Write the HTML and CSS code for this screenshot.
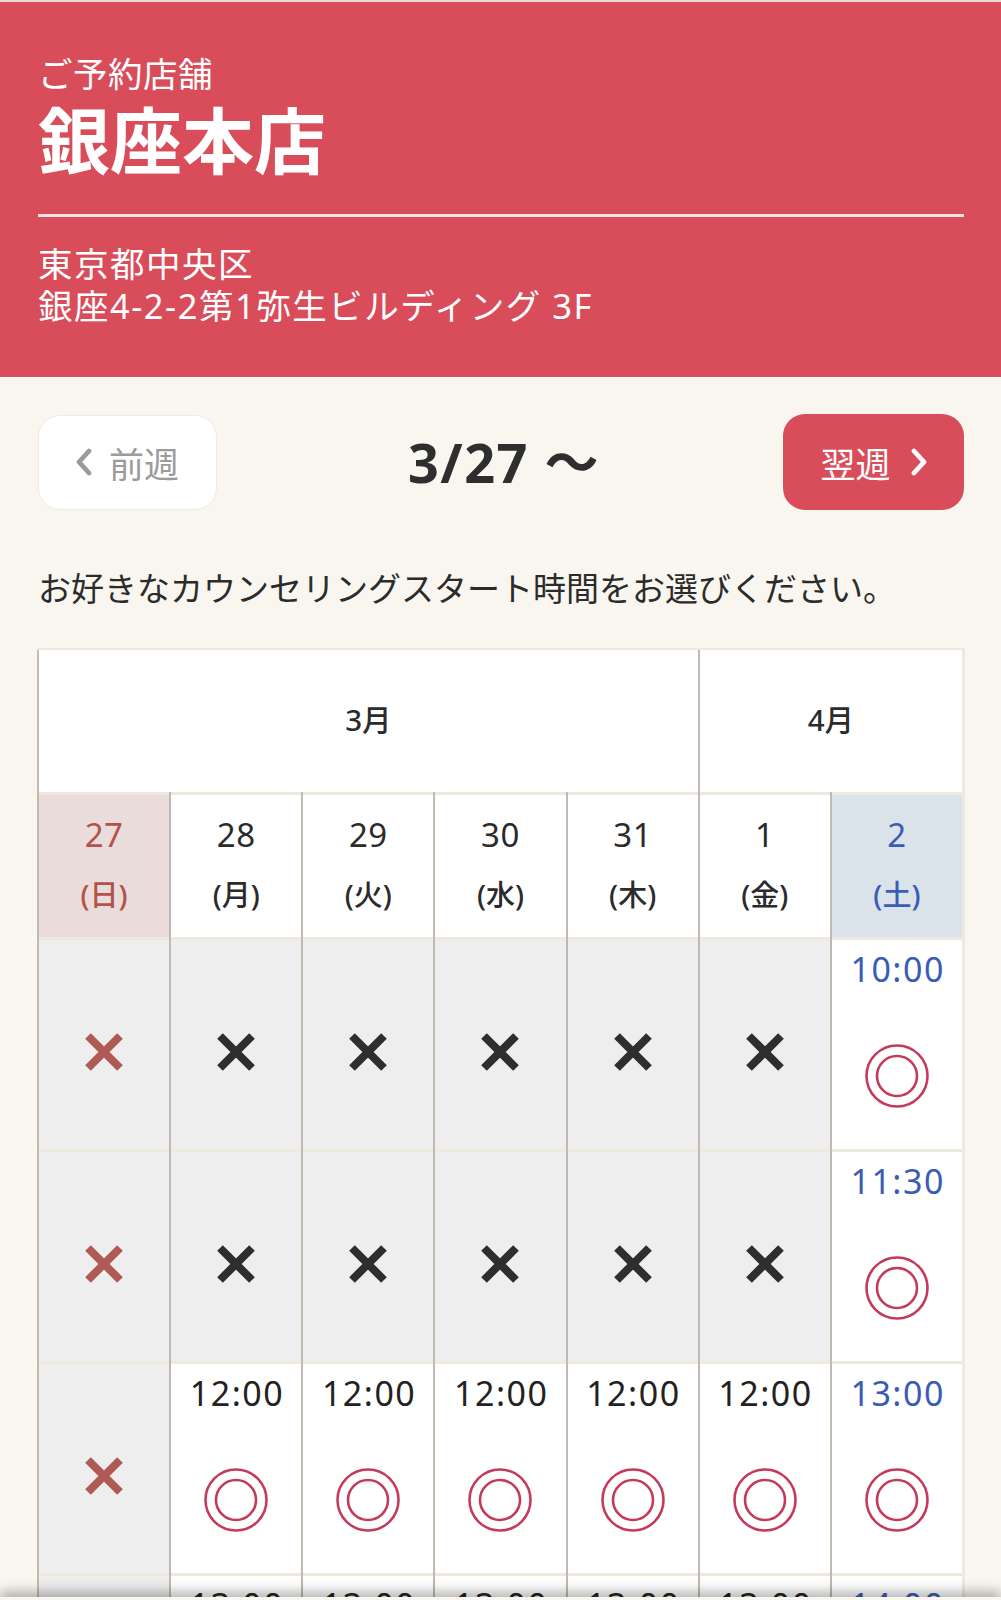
FILE: index.html
```html
<!DOCTYPE html>
<html lang="ja">
<head>
<meta charset="utf-8">
<title>ご予約店舗 銀座本店</title>
<link rel="stylesheet" href="styles.css">
</head>
<body>
<header class="shop">
  <p class="shop-label">ご予約店舗</p>
  <h1 class="shop-name">銀座本店</h1>
  <hr class="shop-rule">
  <p class="shop-addr">東京都中央区<br>銀座4-2-2第1弥生ビルディング 3F</p>
</header>
<main class="content">
  <nav class="week-nav">
    <button class="btn btn-prev" type="button">
      <svg class="chev" width="16" height="28" viewBox="0 0 16 28"><polyline points="13,3 3,14 13,25" fill="none" stroke="currentColor" stroke-width="4.8" stroke-linecap="round" stroke-linejoin="round"/></svg>
      <span>前週</span>
    </button>
    <div class="week-date">3/27 ～</div>
    <button class="btn btn-next" type="button">
      <span>翌週</span>
      <svg class="chev" width="16" height="28" viewBox="0 0 16 28"><polyline points="3,3 13,14 3,25" fill="none" stroke="currentColor" stroke-width="4.8" stroke-linecap="round" stroke-linejoin="round"/></svg>
    </button>
  </nav>
  <p class="lead">お好きなカウンセリングスタート時間をお選びください。</p>

  <div class="cal">
    <div class="cell month span5">3月</div>
    <div class="cell month span2">4月</div>

    <div class="cell day sun"><span class="d-num">27</span><span class="d-wk">(日)</span></div>
    <div class="cell day"><span class="d-num">28</span><span class="d-wk">(月)</span></div>
    <div class="cell day"><span class="d-num">29</span><span class="d-wk">(火)</span></div>
    <div class="cell day"><span class="d-num">30</span><span class="d-wk">(水)</span></div>
    <div class="cell day"><span class="d-num">31</span><span class="d-wk">(木)</span></div>
    <div class="cell day"><span class="d-num">1</span><span class="d-wk">(金)</span></div>
    <div class="cell day sat"><span class="d-num">2</span><span class="d-wk">(土)</span></div>

    <!-- row 1 -->
    <div class="cell slot off sun"><svg class="xmark" width="38" height="38" viewBox="0 0 38 38"><path d="M3 3L35 35M35 3L3 35" stroke="currentColor" stroke-width="8"/></svg></div>
    <div class="cell slot off"><svg class="xmark" width="38" height="38" viewBox="0 0 38 38"><path d="M3 3L35 35M35 3L3 35" stroke="currentColor" stroke-width="8"/></svg></div>
    <div class="cell slot off"><svg class="xmark" width="38" height="38" viewBox="0 0 38 38"><path d="M3 3L35 35M35 3L3 35" stroke="currentColor" stroke-width="8"/></svg></div>
    <div class="cell slot off"><svg class="xmark" width="38" height="38" viewBox="0 0 38 38"><path d="M3 3L35 35M35 3L3 35" stroke="currentColor" stroke-width="8"/></svg></div>
    <div class="cell slot off"><svg class="xmark" width="38" height="38" viewBox="0 0 38 38"><path d="M3 3L35 35M35 3L3 35" stroke="currentColor" stroke-width="8"/></svg></div>
    <div class="cell slot off"><svg class="xmark" width="38" height="38" viewBox="0 0 38 38"><path d="M3 3L35 35M35 3L3 35" stroke="currentColor" stroke-width="8"/></svg></div>
    <div class="cell slot open sat"><span class="time">10:00</span><svg class="omark" width="66" height="66" viewBox="0 0 66 66"><circle cx="33" cy="33" r="30.5" fill="none" stroke="currentColor" stroke-width="2.6"/><circle cx="33" cy="33" r="20" fill="none" stroke="currentColor" stroke-width="2.6"/></svg></div>

    <!-- row 2 -->
    <div class="cell slot off sun"><svg class="xmark" width="38" height="38" viewBox="0 0 38 38"><path d="M3 3L35 35M35 3L3 35" stroke="currentColor" stroke-width="8"/></svg></div>
    <div class="cell slot off"><svg class="xmark" width="38" height="38" viewBox="0 0 38 38"><path d="M3 3L35 35M35 3L3 35" stroke="currentColor" stroke-width="8"/></svg></div>
    <div class="cell slot off"><svg class="xmark" width="38" height="38" viewBox="0 0 38 38"><path d="M3 3L35 35M35 3L3 35" stroke="currentColor" stroke-width="8"/></svg></div>
    <div class="cell slot off"><svg class="xmark" width="38" height="38" viewBox="0 0 38 38"><path d="M3 3L35 35M35 3L3 35" stroke="currentColor" stroke-width="8"/></svg></div>
    <div class="cell slot off"><svg class="xmark" width="38" height="38" viewBox="0 0 38 38"><path d="M3 3L35 35M35 3L3 35" stroke="currentColor" stroke-width="8"/></svg></div>
    <div class="cell slot off"><svg class="xmark" width="38" height="38" viewBox="0 0 38 38"><path d="M3 3L35 35M35 3L3 35" stroke="currentColor" stroke-width="8"/></svg></div>
    <div class="cell slot open sat"><span class="time">11:30</span><svg class="omark" width="66" height="66" viewBox="0 0 66 66"><circle cx="33" cy="33" r="30.5" fill="none" stroke="currentColor" stroke-width="2.6"/><circle cx="33" cy="33" r="20" fill="none" stroke="currentColor" stroke-width="2.6"/></svg></div>

    <!-- row 3 -->
    <div class="cell slot off sun"><svg class="xmark" width="38" height="38" viewBox="0 0 38 38"><path d="M3 3L35 35M35 3L3 35" stroke="currentColor" stroke-width="8"/></svg></div>
    <div class="cell slot open"><span class="time">12:00</span><svg class="omark" width="66" height="66" viewBox="0 0 66 66"><circle cx="33" cy="33" r="30.5" fill="none" stroke="currentColor" stroke-width="2.6"/><circle cx="33" cy="33" r="20" fill="none" stroke="currentColor" stroke-width="2.6"/></svg></div>
    <div class="cell slot open"><span class="time">12:00</span><svg class="omark" width="66" height="66" viewBox="0 0 66 66"><circle cx="33" cy="33" r="30.5" fill="none" stroke="currentColor" stroke-width="2.6"/><circle cx="33" cy="33" r="20" fill="none" stroke="currentColor" stroke-width="2.6"/></svg></div>
    <div class="cell slot open"><span class="time">12:00</span><svg class="omark" width="66" height="66" viewBox="0 0 66 66"><circle cx="33" cy="33" r="30.5" fill="none" stroke="currentColor" stroke-width="2.6"/><circle cx="33" cy="33" r="20" fill="none" stroke="currentColor" stroke-width="2.6"/></svg></div>
    <div class="cell slot open"><span class="time">12:00</span><svg class="omark" width="66" height="66" viewBox="0 0 66 66"><circle cx="33" cy="33" r="30.5" fill="none" stroke="currentColor" stroke-width="2.6"/><circle cx="33" cy="33" r="20" fill="none" stroke="currentColor" stroke-width="2.6"/></svg></div>
    <div class="cell slot open"><span class="time">12:00</span><svg class="omark" width="66" height="66" viewBox="0 0 66 66"><circle cx="33" cy="33" r="30.5" fill="none" stroke="currentColor" stroke-width="2.6"/><circle cx="33" cy="33" r="20" fill="none" stroke="currentColor" stroke-width="2.6"/></svg></div>
    <div class="cell slot open sat"><span class="time">13:00</span><svg class="omark" width="66" height="66" viewBox="0 0 66 66"><circle cx="33" cy="33" r="30.5" fill="none" stroke="currentColor" stroke-width="2.6"/><circle cx="33" cy="33" r="20" fill="none" stroke="currentColor" stroke-width="2.6"/></svg></div>

    <!-- row 4 -->
    <div class="cell slot off sun"><svg class="xmark" width="38" height="38" viewBox="0 0 38 38"><path d="M3 3L35 35M35 3L3 35" stroke="currentColor" stroke-width="8"/></svg></div>
    <div class="cell slot open"><span class="time">13:00</span></div>
    <div class="cell slot open"><span class="time">13:00</span></div>
    <div class="cell slot open"><span class="time">13:00</span></div>
    <div class="cell slot open"><span class="time">13:00</span></div>
    <div class="cell slot open"><span class="time">13:00</span></div>
    <div class="cell slot open sat"><span class="time">14:00</span></div>
  </div>
</main>
<div class="footer-shade"></div>
</body>
</html>
```

FILE: styles.css
```css
* { box-sizing: border-box; }

html, body {
  margin: 0;
  padding: 0;
}

body {
  background: #f8f6ef;
  font-family: "Noto Sans", "Noto Sans CJK JP", sans-serif;
  color: #2b2b2b;
  width: 1001px;
}

/* ---------- shop header ---------- */
.shop {
  background: #d94c5a;
  color: #ffffff;
  border-top: 2px solid #eadada;
  padding: 52px 37px 50px 38px;
}

.shop-label {
  margin: 0;
  font-size: 34.5px;
  line-height: 40px;
  font-weight: 400;
  letter-spacing: 0.5px;
}

.shop-name {
  margin: 6px 0 0;
  font-size: 72px;
  line-height: 80px;
  font-weight: 700;
}

.shop-rule {
  margin: 34px 0 0;
  border: 0;
  height: 3px;
  background: #f6e3e4;
}

.shop-addr {
  margin: 26px 0 0;
  font-size: 34.5px;
  line-height: 42px;
  letter-spacing: 1.5px;
}

/* ---------- week navigation ---------- */
.content {
  padding: 37px 0 40px;
}

.week-nav {
  display: flex;
  align-items: center;
  justify-content: space-between;
  padding: 0 37px 0 38px;
}

.btn {
  display: flex;
  align-items: center;
  justify-content: center;
  gap: 17px;
  height: 95px;
  border-radius: 22px;
  font-family: inherit;
  font-size: 35px;
  padding: 0;
  cursor: pointer;
}

.btn-prev {
  width: 179px;
  background: #ffffff;
  border: 1.5px solid #eeebe5;
  color: #9b9b9b;
}

.btn-next {
  width: 181px;
  height: 96px;
  background: #d94c5a;
  border: 0;
  color: #ffffff;
  gap: 20px;
}

.chev { display: block; }

.week-date {
  font-size: 54px;
  font-weight: 700;
  color: #2e2e2e;
  line-height: 60px;
  letter-spacing: 1.5px;
  padding-left: 8px;
}

.lead {
  margin: 57px 0 0 38px;
  font-size: 33px;
  line-height: 44px;
  color: #2b2b2b;
}

/* ---------- calendar ---------- */
.cal {
  margin: 37px 36px 0 37px;
  display: grid;
  grid-template-columns: repeat(7, 1fr);
  grid-template-rows: 142px 145px repeat(4, 212px);
  border-top: 2px solid #ede9de;
  border-right: 3px solid #ede9de;
}

.cell {
  border-left: 2px solid #c1bab0;
  background: #ffffff;
}

.month {
  display: flex;
  align-items: center;
  justify-content: center;
  padding-bottom: 6px;
  font-size: 29.5px;
  font-weight: 500;
  color: #2b2b2b;
}

.span5 { grid-column: span 5; }
.span2 { grid-column: span 2; }

.day {
  box-shadow: inset 0 3px 0 #ede9de;
  display: flex;
  flex-direction: column;
  align-items: center;
  padding-top: 20px;
  color: #2b2b2b;
}

.d-num {
  font-size: 33px;
  line-height: 46px;
  letter-spacing: 0.5px;
}

.d-wk {
  margin-top: 14px;
  font-size: 29px;
  line-height: 46px;
  font-weight: 500;
}

.day.sun { background: #e9dcda; color: #b5514c; }
.day.sat { background: #dbe3ea; color: #3b5cb4; }

.slot {
  box-shadow: inset 0 3px 0 #ede9de;
  display: flex;
  flex-direction: column;
  align-items: center;
  padding-top: 12px;
}

.slot.off { background: #eeeeee; color: #2e2e2e; }
.slot.off.sun { color: #b05a55; }

.xmark {
  display: block;
  margin-top: 84px;
}

.slot.open { background: #ffffff; color: #222222; }
.slot.open.sat { color: #3b5cb4; }

.time {
  font-size: 34px;
  line-height: 40px;
  letter-spacing: 1.5px;
  padding-left: 1.5px;
}

.omark {
  display: block;
  margin-top: 54px;
  color: #c43a5b;
}

/* bottom bar shadow peeking in from below the viewport */
.footer-shade {
  position: fixed;
  left: 0;
  right: 0;
  bottom: -30px;
  height: 33px;
  background: #f8f6ef;
  box-shadow: 0 -6px 12px rgba(0, 0, 0, 0.28);
}
```
